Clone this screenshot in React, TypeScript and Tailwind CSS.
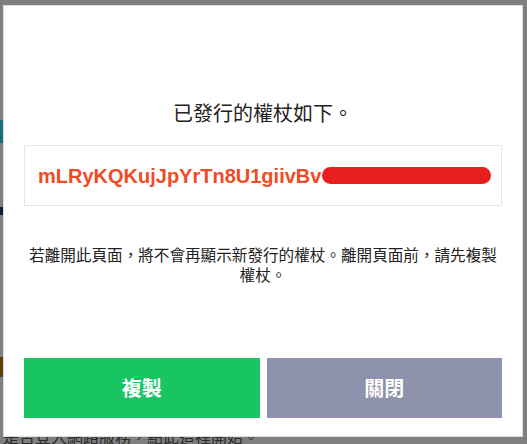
import React from "react";

const cjk = { fontFamily: '"Noto Sans CJK TC", "Noto Sans", sans-serif' };

export default function App() {
  return (
    <div className="relative h-[444px] w-[527px] overflow-hidden bg-white" style={cjk}>
      {/* page behind the overlay */}
      <div className="flex flex-col pt-[120px]">
        <div className="h-[23px] w-[4px] bg-[#38d8ff]" />
        <div className="mt-[64px] h-[8px] w-[4px] bg-[#1a3a6a]" />
        <div className="mt-[142px] h-[20px] w-[4px] bg-[#c8781c]" />
        <div className="mt-[49px] pl-[3px] text-[16px] leading-[20px] text-[#555]">
          是否登入網路服務，點此這裡開始。
        </div>
      </div>

      {/* overlay */}
      <div className="absolute inset-0 bg-black/50" />

      {/* modal */}
      <div className="absolute left-[3px] top-[5px] flex h-[432px] w-[520px] flex-col border border-[#dcdcdc] bg-white px-[20px] pb-[18px] pt-[93px]">
        <h2 className="text-center text-[20px] font-normal leading-[28px] text-[#222]">
          已發行的權杖如下。
        </h2>

        <div className="relative mt-[18px] flex h-[61px] items-center overflow-hidden border border-[#e6e6e6] pl-[13px]">
          <span
            className="whitespace-nowrap text-[20px] font-bold leading-[24px] text-[#ef4b24]"
            style={{ fontFamily: '"Liberation Sans", Arial, sans-serif' }}
          >
            mLRyKQKujJpYrTn8U1giivBv
          </span>
          <span className="absolute left-[297px] top-[21px] h-[17px] w-[169px] rounded-full bg-[#e81e1e]" />
        </div>

        <p className="mt-[38px] text-center text-[15.6px] leading-[20px] text-[#222]">
          若離開此頁面，將不會再顯示新發行的權杖。離開頁面前，請先複製權杖。
        </p>

        <div className="mt-[74px] grid h-[60px] grid-cols-2 gap-[7px]">
          <button className="flex items-center justify-center bg-[#19c563] text-[20px] font-bold text-white">
            複製
          </button>
          <button className="flex items-center justify-center bg-[#8f92ac] text-[20px] font-bold text-white">
            關閉
          </button>
        </div>
      </div>
    </div>
  );
}
